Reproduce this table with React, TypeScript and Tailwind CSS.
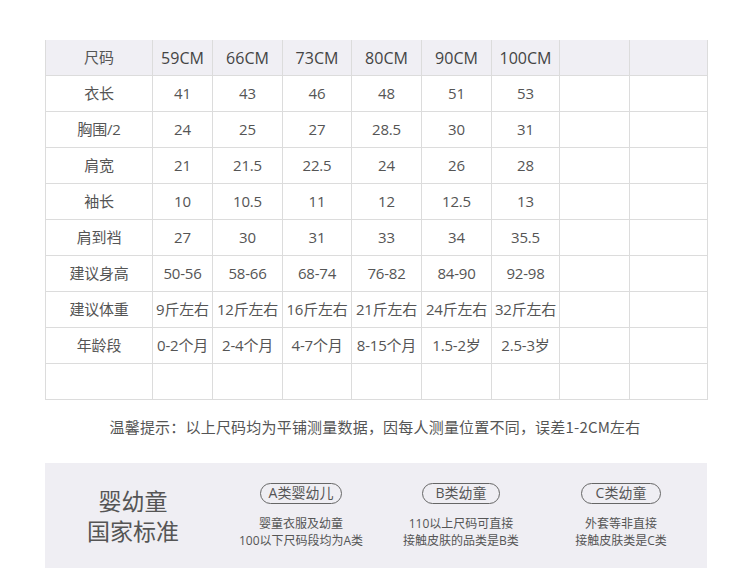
const sizes = ["59CM", "66CM", "73CM", "80CM", "90CM", "100CM", "", ""];

const rows: string[][] = [
  ["衣长", "41", "43", "46", "48", "51", "53", "", ""],
  ["胸围/2", "24", "25", "27", "28.5", "30", "31", "", ""],
  ["肩宽", "21", "21.5", "22.5", "24", "26", "28", "", ""],
  ["袖长", "10", "10.5", "11", "12", "12.5", "13", "", ""],
  ["肩到裆", "27", "30", "31", "33", "34", "35.5", "", ""],
  ["建议身高", "50-56", "58-66", "68-74", "76-82", "84-90", "92-98", "", ""],
  ["建议体重", "9斤左右", "12斤左右", "16斤左右", "21斤左右", "24斤左右", "32斤左右", "", ""],
  ["年龄段", "0-2个月", "2-4个月", "4-7个月", "8-15个月", "1.5-2岁", "2.5-3岁", "", ""],
  ["", "", "", "", "", "", "", "", ""],
];

const classes = [
  { badge: "A类婴幼儿", width: "w-[82px]", lines: ["婴童衣服及幼童", "100以下尺码段均为A类"] },
  { badge: "B类幼童", width: "w-[78px]", lines: ["110以上尺码可直接", "接触皮肤的品类是B类"] },
  { badge: "C类幼童", width: "w-[80px]", lines: ["外套等非直接", "接触皮肤类是C类"] },
];

export default function App() {
  return (
    <div className="w-[750px] h-[587px] bg-white px-[45px] pt-[40px] font-['Open_Sans','Noto_Sans_CJK_SC',sans-serif] text-[#555]">
      {/* Size table */}
      <div className="grid grid-cols-[107px_60px_70px_69px_70px_70px_68px_70px_78px] border-l border-[#dcdcdc]">
        <div className="h-[36px] flex items-center justify-center bg-[#f0eff4] border-r border-b border-[#dcdcdc] text-[15px]">
          尺码
        </div>
        {sizes.map((s, i) => (
          <div
            key={i}
            className="h-[36px] flex items-center justify-center bg-[#f0eff4] border-r border-b border-[#dcdcdc] text-[16px] text-[#444]"
          >
            {s}
          </div>
        ))}
        {rows.map((row, r) =>
          row.map((cell, c) => (
            <div
              key={r + "-" + c}
              className="h-[36px] flex items-center justify-center whitespace-nowrap border-r border-b border-[#dcdcdc] text-[15px] tracking-[-0.2px]"
            >
              {cell}
            </div>
          ))
        )}
      </div>

      <p className="mt-[17px] text-center text-[15px] leading-[20px] tracking-[0.2px] font-['Noto_Sans_CJK_SC','Open_Sans',sans-serif]">
        温馨提示：以上尺码均为平铺测量数据，因每人测量位置不同，误差1-2CM左右
      </p>

      {/* Standard panel */}
      <div className="mt-[26px] h-[105px] w-[662px] bg-[#efeef3] flex items-center">
        <div className="w-[176px] flex flex-col items-center text-[23px] leading-[30px] text-[#555]">
          <span>婴幼童</span>
          <span>国家标准</span>
        </div>
        {classes.map((c) => (
          <div key={c.badge} className="w-[160px] flex flex-col items-center">
            <div
              className={`${c.width} h-[21px] rounded-full border border-[#666] flex items-center justify-center text-[14px] leading-none text-[#555]`}
            >
              {c.badge}
            </div>
            <div className="mt-[11px] flex flex-col items-center text-[12px] leading-[17px] text-[#555]">
              {c.lines.map((l) => (
                <span key={l}>{l}</span>
              ))}
            </div>
          </div>
        ))}
      </div>
    </div>
  );
}
